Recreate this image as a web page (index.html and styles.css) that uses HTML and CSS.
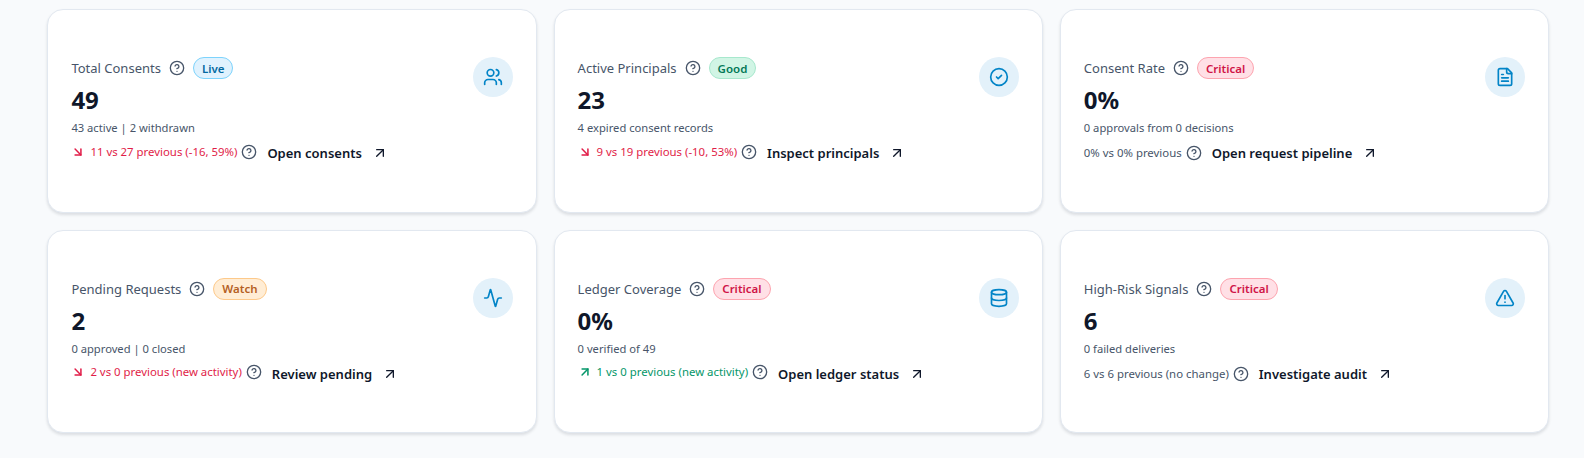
FILE: index.html
```html
<!DOCTYPE html>
<html lang="en">
<head>
<meta charset="utf-8">
<title>Consent metrics</title>
<link rel="stylesheet" href="styles.css">
</head>
<body>
<svg class="defs" width="0" height="0" aria-hidden="true">
  <symbol id="help" viewBox="0 0 24 24"><circle cx="12" cy="12" r="10"/><path d="M9.09 9a3 3 0 0 1 5.83 1c0 2-3 3-3 3"/><path d="M12 17h.01"/></symbol>
  <symbol id="down" viewBox="0 0 24 24"><path d="M7 7l10 10"/><path d="M17 7v10H7"/></symbol>
  <symbol id="up" viewBox="0 0 24 24"><path d="M7 17L17 7"/><path d="M7 7h10v10"/></symbol>
</svg>
<main class="grid">
  <article class="card">
    <div class="body">
      <div class="head"><span class="label">Total Consents</span><svg class="help"><use href="#help"/></svg><span class="pill live">Live</span></div>
      <div class="value">49</div>
      <div class="sub">43 active | 2 withdrawn</div>
      <div class="foot trend"><span class="delta bad"><svg class="arrow"><use href="#down"/></svg>11 vs 27 previous (-16, 59%)</span><svg class="help"><use href="#help"/></svg><a class="link">Open consents<svg class="go"><use href="#up"/></svg></a></div>
    </div>
    <div class="badge"><svg viewBox="0 0 24 24"><path d="M16 21v-2a4 4 0 0 0-4-4H6a4 4 0 0 0-4 4v2"/><circle cx="9" cy="7" r="4"/><path d="M22 21v-2a4 4 0 0 0-3-3.87"/><path d="M16 3.13a4 4 0 0 1 0 7.75"/></svg></div>
  </article>
  <article class="card">
    <div class="body">
      <div class="head"><span class="label">Active Principals</span><svg class="help"><use href="#help"/></svg><span class="pill good">Good</span></div>
      <div class="value">23</div>
      <div class="sub">4 expired consent records</div>
      <div class="foot trend"><span class="delta bad"><svg class="arrow"><use href="#down"/></svg>9 vs 19 previous (-10, 53%)</span><svg class="help"><use href="#help"/></svg><a class="link">Inspect principals<svg class="go"><use href="#up"/></svg></a></div>
    </div>
    <div class="badge"><svg viewBox="0 0 24 24"><circle cx="12" cy="12" r="10"/><path d="M9 12l2 2 4-4"/></svg></div>
  </article>
  <article class="card">
    <div class="body">
      <div class="head"><span class="label">Consent Rate</span><svg class="help"><use href="#help"/></svg><span class="pill crit">Critical</span></div>
      <div class="value">0%</div>
      <div class="sub">0 approvals from 0 decisions</div>
      <div class="foot"><span class="delta flat">0% vs 0% previous</span><svg class="help"><use href="#help"/></svg><a class="link">Open request pipeline<svg class="go"><use href="#up"/></svg></a></div>
    </div>
    <div class="badge"><svg viewBox="0 0 24 24"><path d="M15 2H6a2 2 0 0 0-2 2v16a2 2 0 0 0 2 2h12a2 2 0 0 0 2-2V7z"/><path d="M14 2v4a2 2 0 0 0 2 2h4"/><path d="M10 9H8"/><path d="M16 13H8"/><path d="M16 17H8"/></svg></div>
  </article>
  <article class="card">
    <div class="body">
      <div class="head"><span class="label">Pending Requests</span><svg class="help"><use href="#help"/></svg><span class="pill watch">Watch</span></div>
      <div class="value">2</div>
      <div class="sub">0 approved | 0 closed</div>
      <div class="foot trend"><span class="delta bad"><svg class="arrow"><use href="#down"/></svg>2 vs 0 previous (new activity)</span><svg class="help"><use href="#help"/></svg><a class="link">Review pending<svg class="go"><use href="#up"/></svg></a></div>
    </div>
    <div class="badge"><svg viewBox="0 0 24 24"><path d="M22 12h-2.48a2 2 0 0 0-1.93 1.46l-2.35 8.36a.25.25 0 0 1-.48 0L9.24 2.18a.25.25 0 0 0-.48 0l-2.35 8.36A2 2 0 0 1 4.49 12H2"/></svg></div>
  </article>
  <article class="card">
    <div class="body">
      <div class="head"><span class="label">Ledger Coverage</span><svg class="help"><use href="#help"/></svg><span class="pill crit">Critical</span></div>
      <div class="value">0%</div>
      <div class="sub">0 verified of 49</div>
      <div class="foot trend"><span class="delta pos"><svg class="arrow"><use href="#up"/></svg>1 vs 0 previous (new activity)</span><svg class="help"><use href="#help"/></svg><a class="link">Open ledger status<svg class="go"><use href="#up"/></svg></a></div>
    </div>
    <div class="badge"><svg viewBox="0 0 24 24"><ellipse cx="12" cy="5" rx="9" ry="3"/><path d="M3 5v14a9 3 0 0 0 18 0V5"/><path d="M3 12a9 3 0 0 0 18 0"/></svg></div>
  </article>
  <article class="card">
    <div class="body">
      <div class="head"><span class="label">High-Risk Signals</span><svg class="help"><use href="#help"/></svg><span class="pill crit">Critical</span></div>
      <div class="value">6</div>
      <div class="sub">0 failed deliveries</div>
      <div class="foot"><span class="delta flat">6 vs 6 previous (no change)</span><svg class="help"><use href="#help"/></svg><a class="link">Investigate audit<svg class="go"><use href="#up"/></svg></a></div>
    </div>
    <div class="badge"><svg viewBox="0 0 24 24"><path d="M21.73 18l-8-14a2 2 0 0 0-3.48 0l-8 14A2 2 0 0 0 4 21h16a2 2 0 0 0 1.73-3"/><path d="M12 9v4"/><path d="M12 17h.01"/></svg></div>
  </article>
</main>
</body>
</html>
```
FILE: styles.css
```css
* { box-sizing: border-box; }
html, body { margin: 0; height: 100%; }
body {
  background: #f8fafc;
  color: #0f172a;
  font-family: "Noto Sans", "Open Sans", sans-serif;
  overflow: hidden;
}
.defs { position: absolute; }
svg { fill: none; stroke: currentColor; stroke-linecap: round; stroke-linejoin: round; stroke-width: 2; flex: none; }
.grid {
  display: grid;
  grid-template-columns: repeat(3, 1fr);
  grid-auto-rows: 203.5px;
  gap: 17px;
  padding: 9px 35px 0 47.4px;
}
.card {
  display: flex;
  align-items: flex-start;
  justify-content: space-between;
  padding: 47px 23px 0;
  background: #fff;
  border: 1px solid #e2e8f0;
  border-radius: 16px;
  box-shadow: 0 2px 3px rgba(15, 23, 42, 0.12);
}
.body { display: flex; flex-direction: column; }
.head { display: flex; align-items: center; height: 22px; }
.label { font-size: 13px; color: #475569; }
.help { width: 16px; height: 16px; color: #475569; }
.head .help { margin-left: 8px; margin-right: 8px; }
.pill {
  display: inline-flex;
  align-items: center;
  height: 22px;
  padding: 0 8px;
  border: 1px solid;
  border-radius: 999px;
  font-size: 11.5px;
  font-weight: 600;
}
.live { background: #e0f2fe; border-color: #7dd3fc; color: #0369a1; }
.good { background: #d1f5e5; border-color: #a7e8cd; color: #047857; }
.crit { background: #ffe0e6; border-color: #fda4af; color: #cf1447; }
.watch { background: #ffedd5; border-color: #fdc98a; color: #b45f24; }
.value { margin-top: 5px; font-size: 24px; line-height: 32px; font-weight: 700; color: #0f172a; }
.sub { margin-top: 4px; font-size: 11.2px; line-height: 16px; color: #475569; }
.foot { display: flex; align-items: center; margin-top: 7px; height: 20px; }
.delta { display: inline-flex; align-items: center; font-size: 11.4px; line-height: 16px; }
.trend .delta, .trend .help { margin-bottom: 3px; }
.bad { color: #e11d48; }
.pos { color: #059669; }
.flat { color: #475569; }
.arrow { width: 14px; height: 14px; margin-right: 5px; stroke-width: 2.6; }
.foot .help { margin-left: 4px; margin-right: 10px; }
.link { display: inline-flex; align-items: center; font-size: 13px; font-weight: 600; color: #0f172a; }
.go { width: 16px; height: 16px; margin-left: 10px; }
.badge {
  display: flex;
  align-items: center;
  justify-content: center;
  width: 40px;
  height: 40px;
  border-radius: 50%;
  background: #e3f1fa;
  color: #0284c7;
}
.badge svg { width: 20px; height: 20px; }
```
